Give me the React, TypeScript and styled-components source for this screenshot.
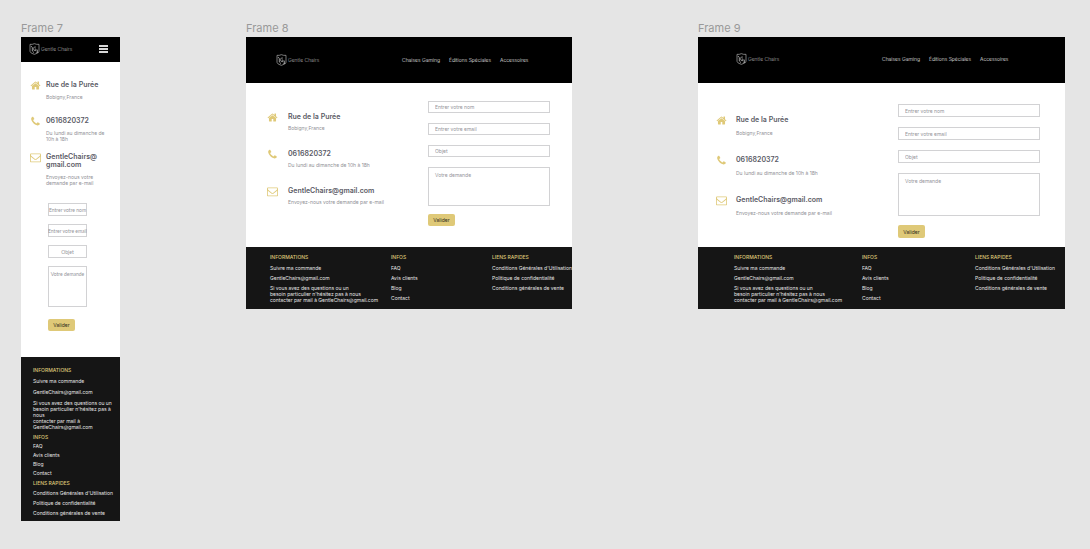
import React from 'react';
import styled, { createGlobalStyle } from 'styled-components';

const GOLD = '#dfc978';

const GlobalStyle = createGlobalStyle`
  *, *::before, *::after { box-sizing: border-box; }
  body {
    margin: 0;
    background: #e5e5e5;
    font-family: Inter, "Liberation Sans", sans-serif;
  }
  h1, h2, h3, p, ul { margin: 0; padding: 0; }
  ul { list-style: none; }
  a { color: inherit; text-decoration: none; }
`;

type Size = 'mobile' | 'tablet' | 'desktop';

interface Metrics {
  headerHeight: number;
  headerPad: string;
  headerCols: string;
  bodyPad: string;
  bodyCols: string;
  contactTop: number;
  contactGap: number;
  contactMin: number;
  iconGap: number;
  lineGap: number;
  formPad: string;
  fieldHeight: number;
  fieldGap: number;
  areaHeight: number;
  buttonTop: number;
  buttonHeight: number;
  footerPad: string;
  footerCols: string;
}

const metrics: Record<Size, Metrics> = {
  mobile: {
    headerHeight: 25,
    headerPad: '0 12px 1px 8px',
    headerCols: '1fr auto',
    bodyPad: '0 6px 26px 9px',
    bodyCols: '1fr',
    contactTop: 19,
    contactGap: 10,
    contactMin: 26,
    iconGap: 4,
    lineGap: 5,
    formPad: '17px 27px 0 18px',
    fieldHeight: 13,
    fieldGap: 8,
    areaHeight: 41,
    buttonTop: 12,
    buttonHeight: 12,
    footerPad: '10px 6px 5px 12px',
    footerCols: '1fr',
  },
  tablet: {
    headerHeight: 46,
    headerPad: '0 0 0 30px',
    headerCols: '126fr 170fr',
    bodyPad: '0 22px 21px 21px',
    bodyCols: '161fr 122fr',
    contactTop: 30,
    contactGap: 19,
    contactMin: 0,
    iconGap: 9,
    lineGap: 4,
    formPad: '18px 0 0',
    fieldHeight: 12,
    fieldGap: 10,
    areaHeight: 39,
    buttonTop: 8,
    buttonHeight: 12,
    footerPad: '7px 0 6px 24px',
    footerCols: '121fr 101fr 80fr',
  },
  desktop: {
    headerHeight: 46,
    headerPad: '0 0 2px 38px',
    headerCols: '146fr 183fr',
    bodyPad: '0 25px 9px 18px',
    bodyCols: '182fr 142fr',
    contactTop: 33,
    contactGap: 20,
    contactMin: 0,
    iconGap: 8,
    lineGap: 6,
    formPad: '21px 0 0',
    fieldHeight: 13,
    fieldGap: 10,
    areaHeight: 43,
    buttonTop: 9,
    buttonHeight: 13,
    footerPad: '7px 0 6px 36px',
    footerCols: '128fr 113fr 90fr',
  },
};

interface M {
  $m: Metrics;
}

const Canvas = styled.main`
  display: grid;
  grid-template-columns: 99fr 326fr 367fr;
  column-gap: 126px;
  align-items: start;
  padding: 21px 25px 28px 21px;
`;

const Artboard = styled.section`
  min-width: 0;
`;

const ArtboardTitle = styled.h1`
  margin-bottom: 2px;
  font-size: 11px;
  line-height: 14px;
  font-weight: 400;
  color: #999;
`;

const Header = styled.header<M>`
  display: grid;
  grid-template-columns: ${({ $m }) => $m.headerCols};
  align-items: center;
  height: ${({ $m }) => $m.headerHeight}px;
  padding: ${({ $m }) => $m.headerPad};
  background: #000;
`;

const Brand = styled.a`
  display: flex;
  align-items: center;
  gap: 1px;
  font-size: 5px;
  line-height: 6px;
  font-weight: 300;
  color: #b4b4b4;
  white-space: nowrap;
`;

const Nav = styled.nav`
  display: flex;
  gap: 9px;
  font-size: 5px;
  line-height: 6px;
  font-weight: 300;
  color: #e6e6e6;
  white-space: nowrap;
`;

const MenuButton = styled.button`
  display: flex;
  flex-direction: column;
  gap: 1px;
  width: 9px;
  padding: 0;
  border: 0;
  background: none;
`;

const MenuBar = styled.span`
  height: 2px;
  background: #d8d8d8;
`;

const Body = styled.div<M>`
  display: grid;
  grid-template-columns: ${({ $m }) => $m.bodyCols};
  padding: ${({ $m }) => $m.bodyPad};
  background: #fff;
`;

const Contacts = styled.ul<M>`
  display: flex;
  flex-direction: column;
  gap: ${({ $m }) => $m.contactGap}px;
  padding-top: ${({ $m }) => $m.contactTop}px;
`;

const Contact = styled.li<M>`
  display: grid;
  grid-template-columns: 12px 1fr;
  align-items: start;
  column-gap: ${({ $m }) => $m.iconGap}px;
  min-height: ${({ $m }) => $m.contactMin}px;
`;

const ContactIcon = styled.svg`
  width: 11px;
  height: 11px;
  margin-top: -1px;
  fill: ${GOLD};
`;

const ContactText = styled.div<M>`
  display: flex;
  flex-direction: column;
  gap: ${({ $m }) => $m.lineGap}px;
`;

const ContactTitle = styled.h2`
  font-size: 7px;
  line-height: 8px;
  font-weight: 600;
  color: #5b5b66;
`;

const ContactNote = styled.p`
  font-size: 5px;
  line-height: 6px;
  font-weight: 400;
  color: #909096;
`;

const Form = styled.form<M>`
  display: flex;
  flex-direction: column;
  align-items: flex-start;
  padding: ${({ $m }) => $m.formPad};
`;

const Fields = styled.div<M>`
  display: flex;
  flex-direction: column;
  gap: ${({ $m }) => $m.fieldGap}px;
  width: 100%;
`;

interface FieldProps extends M {
  $compact: boolean;
}

const Input = styled.input<FieldProps>`
  width: 100%;
  height: ${({ $m }) => $m.fieldHeight}px;
  padding: 0 ${({ $compact }) => ($compact ? 0 : 7)}px;
  border: 0;
  border-radius: 0;
  box-shadow: inset 0 0 0 1px #d2d2d4;
  background: #fff;
  font-family: ${({ $compact }) => ($compact ? 'Lato' : 'Inter')}, "Liberation Sans", sans-serif;
  font-size: 5px;
  line-height: 6px;
  text-align: ${({ $compact }) => ($compact ? 'center' : 'left')};
  &::placeholder { color: #94949a; opacity: 1; }
`;

const TextArea = styled.textarea<FieldProps>`
  display: block;
  width: 100%;
  height: ${({ $m }) => $m.areaHeight}px;
  padding: 5px ${({ $compact }) => ($compact ? 0 : 7)}px;
  border: 0;
  border-radius: 0;
  box-shadow: inset 0 0 0 1px #d2d2d4;
  background: #fff;
  font-family: ${({ $compact }) => ($compact ? 'Lato' : 'Inter')}, "Liberation Sans", sans-serif;
  font-size: 5px;
  line-height: 6px;
  text-align: ${({ $compact }) => ($compact ? 'center' : 'left')};
  resize: none;
  overflow: hidden;
  &::placeholder { color: #94949a; opacity: 1; }
`;

const SubmitButton = styled.button<M>`
  width: 27px;
  height: ${({ $m }) => $m.buttonHeight}px;
  margin-top: ${({ $m }) => $m.buttonTop}px;
  padding: 0;
  border: 0;
  border-radius: 2px;
  background: ${GOLD};
  color: #2c2818;
  font: 400 5px/6px Inter, "Liberation Sans", sans-serif;
`;

const Footer = styled.footer<M>`
  display: grid;
  grid-template-columns: ${({ $m }) => $m.footerCols};
  row-gap: 4px;
  padding: ${({ $m }) => $m.footerPad};
  background: #151515;
  color: #e6e6e6;
`;

const FooterGroup = styled.div<{ $gap: number }>`
  display: flex;
  flex-direction: column;
  gap: ${({ $gap }) => $gap}px;
  min-width: 0;
`;

const FooterTitle = styled.h3`
  font-size: 5px;
  line-height: 6px;
  font-weight: 500;
  color: ${GOLD};
`;

const FooterLinks = styled.ul<{ $gap: number }>`
  display: flex;
  flex-direction: column;
  gap: ${({ $gap }) => $gap}px;
  font-size: 5px;
  line-height: 6px;
  font-weight: 400;
  white-space: nowrap;
`;

const FooterNote = styled.li<{ $wrap: boolean }>`
  white-space: ${({ $wrap }) => ($wrap ? 'normal' : 'nowrap')};
`;

const HOME =
  'M1472 992v480q0 26-19 45t-45 19h-384v-384h-256v384h-384q-26 0-45-19t-19-45v-480q0-1 .5-3t.5-3l575-474 575 474q1 2 1 6zm223-69l-62 74q-8 9-21 11h-3q-13 0-21-7l-692-577-692 577q-12 8-24 7-13-2-21-11l-62-74q-8-10-7-23.5t11-21.5l719-599q32-26 76-26t76 26l244 204v-195q0-14 9-23t23-9h192q14 0 23 9t9 23v408l219 182q10 8 11 21.5t-7 23.5z';
const PHONE =
  'M1600 1240q0 27-10 70.5t-21 68.5q-21 50-122 106-94 51-186 51-27 0-53-3.5t-57.5-12.5-47-14.5-55.5-20.5-49-18q-98-35-175-83-127-79-264-216t-216-264q-48-77-83-175-3-9-18-49t-20.5-55.5-14.5-47-12.5-57.5-3.5-53q0-92 51-186 56-101 106-122 25-11 68.5-21t70.5-10q14 0 21 3 18 6 53 76 11 19 30 54t35 63.5 31 53.5q3 4 17.5 25t21.5 35.5 7 28.5q0 20-28.5 50t-62 55-62 53-28.5 46q0 9 5 22.5t8.5 20.5 14 24 11.5 19q76 137 174 235t235 174q2 1 19 11.5t24 14 20.5 8.5 22.5 5q18 0 46-28.5t53-62 55-62 50-28.5q14 0 28.5 7t35.5 21.5 25 17.5q25 15 53.5 31t63.5 35 54 30q70 35 76 53 3 7 3 21z';
const ENVELOPE =
  'M1664 1504v-768q-32 36-69 66-268 206-426 338-51 43-83 67t-86.5 48.5-102.5 24.5h-2q-48 0-102.5-24.5t-86.5-48.5-83-67q-158-132-426-338-37-30-69-66v768q0 13 9.5 22.5t22.5 9.5h1472q13 0 22.5-9.5t9.5-22.5zm0-1051v-24.5l-.5-13-3-12.5-5.5-9-9-7.5-14-2.5h-1472q-13 0-22.5 9.5t-9.5 22.5q0 168 147 284 193 152 401 317 6 5 35 29.5t46 37.5 44.5 31.5 50.5 27.5 43 9h2q20 0 43-9t50.5-27.5 44.5-31.5 46-37.5 35-29.5q208-165 401-317 54-43 100.5-115.5t46.5-131.5zm128-37v1088q0 66-47 113t-113 47h-1472q-66 0-113-47t-47-113v-1088q0-66 47-113t113-47h1472q66 0 113 47t47 113z';

const Crest = () => (
  <svg width="11" height="12" viewBox="0 0 33 36" fill="none" stroke="#c8c8c8" strokeWidth="1.8" aria-hidden="true">
    <path d="M3 4Q10 5 16 2Q23 5 30 4V25Q29 31 16 34Q4 31 3 25Z" />
    <path d="M6 9L10 14V24L15 29" strokeWidth="2.2" />
    <path d="M21 12Q14 10 13 17Q13 24 21 23V18H17" />
    <path d="M25 20V28M22 28H28" strokeWidth="2.2" />
  </svg>
);

const ContactEntry = ({ m, icon, title, note }: { m: Metrics; icon: string; title: React.ReactNode; note: string }) => (
  <Contact $m={m}>
    <ContactIcon viewBox="0 0 1792 1792" aria-hidden="true">
      <path d={icon} />
    </ContactIcon>
    <ContactText $m={m}>
      <ContactTitle>{title}</ContactTitle>
      <ContactNote>{note}</ContactNote>
    </ContactText>
  </Contact>
);

const ContactPage = ({ title, size }: { title: string; size: Size }) => {
  const m = metrics[size];
  const mobile = size === 'mobile';
  return (
    <Artboard>
      <ArtboardTitle>{title}</ArtboardTitle>
      <Header $m={m}>
        <Brand href="#">
          <Crest />
          Gentle Chairs
        </Brand>
        {mobile ? (
          <MenuButton type="button" aria-label="Menu">
            <MenuBar />
            <MenuBar />
            <MenuBar />
          </MenuButton>
        ) : (
          <Nav>
            <a href="#">Chaises Gaming</a>
            <a href="#">Éditions Spéciales</a>
            <a href="#">Accessoires</a>
          </Nav>
        )}
      </Header>
      <Body $m={m}>
        <Contacts $m={m}>
          <ContactEntry m={m} icon={HOME} title="Rue de la Purée" note="Bobigny,France" />
          <ContactEntry m={m} icon={PHONE} title="0616820372" note="Du lundi au dimanche de 10h à 18h" />
          <ContactEntry
            m={m}
            icon={ENVELOPE}
            title={mobile ? <>GentleChairs@<br />gmail.com</> : 'GentleChairs@gmail.com'}
            note="Envoyez-nous votre demande par e-mail"
          />
        </Contacts>
        <Form $m={m}>
          <Fields $m={m}>
            <Input $m={m} $compact={mobile} type="text" aria-label="Nom" placeholder="Entrer votre nom" />
            <Input $m={m} $compact={mobile} type="email" aria-label="Email" placeholder="Entrer votre email" />
            <Input $m={m} $compact={mobile} type="text" aria-label="Objet" placeholder="Objet" />
            <TextArea $m={m} $compact={mobile} aria-label="Votre demande" placeholder="Votre demande" />
          </Fields>
          <SubmitButton $m={m} type="button">Valider</SubmitButton>
        </Form>
      </Body>
      <Footer $m={m}>
        <FooterGroup $gap={5}>
          <FooterTitle>INFORMATIONS</FooterTitle>
          <FooterLinks $gap={mobile ? 5 : 4}>
            <li><a href="#">Suivre ma commande</a></li>
            <li><a href="#">GentleChairs@gmail.com</a></li>
            <FooterNote $wrap={mobile}>
              Si vous avez des questions ou un<br />
              besoin particulier n'hésitez pas à {mobile && <br />}nous<br />
              contacter par mail à GentleChairs@gmail.com
            </FooterNote>
          </FooterLinks>
        </FooterGroup>
        <FooterGroup $gap={mobile ? 3 : 5}>
          <FooterTitle>INFOS</FooterTitle>
          <FooterLinks $gap={mobile ? 3 : 4}>
            <li><a href="#">FAQ</a></li>
            <li><a href="#">Avis clients</a></li>
            <li><a href="#">Blog</a></li>
            <li><a href="#">Contact</a></li>
          </FooterLinks>
        </FooterGroup>
        <FooterGroup $gap={mobile ? 4 : 5}>
          <FooterTitle>LIENS RAPIDES</FooterTitle>
          <FooterLinks $gap={4}>
            <li><a href="#">Conditions Générales d'Utilisation</a></li>
            <li><a href="#">Politique de confidentialité</a></li>
            <li><a href="#">Conditions générales de vente</a></li>
          </FooterLinks>
        </FooterGroup>
      </Footer>
    </Artboard>
  );
};

export default function App() {
  return (
    <>
      <GlobalStyle />
      <Canvas>
        <ContactPage title="Frame 7" size="mobile" />
        <ContactPage title="Frame 8" size="tablet" />
        <ContactPage title="Frame 9" size="desktop" />
      </Canvas>
    </>
  );
}
